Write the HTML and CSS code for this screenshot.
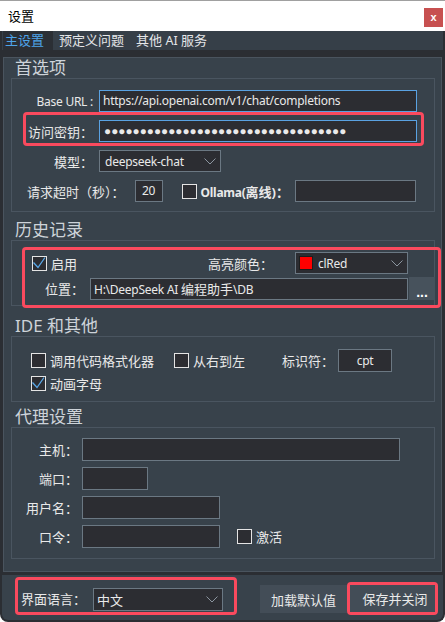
FILE: index.html
```html
<!DOCTYPE html>
<html lang="zh-CN">
<head>
  <meta charset="UTF-8">
  <meta name="viewport" content="width=device-width, initial-scale=1.0">
  <title>设置</title>
  <link rel="stylesheet" href="styles.css">
</head>
<body>
<div class="window">
  <div class="titlebar">
    <span class="caption">设置</span>
    <span class="close">x</span>
  </div>

  <div class="frame">
    <div class="tabs">
      <span class="tab active">主设置</span>
      <span class="tab">预定义问题</span>
      <span class="tab">其他 <span class="en">AI</span> 服务</span>
    </div>

    <div class="page">
      <div class="panel">

        <!-- 首选项 -->
        <div class="group">
          <div class="group-title">首选项</div>
          <div class="box box-main">
            <div class="row row-url">
              <span class="lbl en">Base URL :</span>
              <div class="field focus w-url en">https://api.openai.com/v1/chat/completions</div>
            </div>
            <div class="mark mark-key">
              <div class="row">
                <span class="lbl lbl-key">访问密钥：</span>
                <div class="field focus w-url dots">●●●●●●●●●●●●●●●●●●●●●●●●●●●●●●●●●●</div>
              </div>
            </div>
            <div class="row row-model">
              <span class="lbl">模型：</span>
              <div class="combo w-model">
                <span class="en">deepseek-chat</span>
                <svg width="12" height="7" viewBox="0 0 12 7"><path d="M0.5 0.5 L6 6 L11.5 0.5" fill="none" stroke="#8b959f" stroke-width="1"/></svg>
              </div>
            </div>
            <div class="row row-timeout">
              <span class="lbl-timeout">请求超时（秒）：</span>
              <div class="field w-timeout en">20</div>
              <span class="chk chk-ollama"></span>
              <span class="lbl-ollama"><span class="en">Ollama(</span>离线)：</span>
              <div class="field w-ollama"></div>
            </div>
          </div>
        </div>

        <!-- 历史记录 -->
        <div class="group g-history">
          <div class="group-title">历史记录</div>
          <div class="box">
            <div class="mark mark-history">
              <div class="row row-enable">
                <span class="chk">
                  <svg width="13" height="13" viewBox="0 0 13 13"><path d="M0.5 5.5 L5 10.5 L12 0.5" fill="none" stroke="#5aa8e8" stroke-width="1.3"/></svg>
                </span>
                <span class="chk-text">启用</span>
                <span class="lbl-color">高亮颜色：</span>
                <div class="combo w-color">
                  <span class="color-value"><span class="swatch"></span><span class="en">clRed</span></span>
                  <svg width="12" height="7" viewBox="0 0 12 7"><path d="M0.5 0.5 L6 6 L11.5 0.5" fill="none" stroke="#8b959f" stroke-width="1"/></svg>
                </div>
              </div>
              <div class="row row-path">
                <span class="lbl-path">位置：</span>
                <div class="field w-path"><span class="en">H:\DeepSeek AI </span>编程助手<span class="en">\DB</span></div>
                <span class="btn-browse">...</span>
              </div>
            </div>
          </div>
        </div>

        <!-- IDE 和其他 -->
        <div class="group g-ide">
          <div class="group-title">IDE 和其他</div>
          <div class="box box-ide">
            <div class="row row-ide">
              <span class="opt w-opt1"><span class="chk"></span><span class="chk-text">调用代码格式化器</span></span>
              <span class="opt w-opt2"><span class="chk"></span><span class="chk-text">从右到左</span></span>
              <span class="lbl-ident">标识符：</span>
              <div class="field w-ident en">cpt</div>
            </div>
            <div class="row row-anim">
              <span class="chk">
                <svg width="13" height="13" viewBox="0 0 13 13"><path d="M0.5 5.5 L5 10.5 L12 0.5" fill="none" stroke="#5aa8e8" stroke-width="1.3"/></svg>
              </span>
              <span class="chk-text">动画字母</span>
            </div>
          </div>
        </div>

        <!-- 代理设置 -->
        <div class="group g-proxy">
          <div class="group-title">代理设置</div>
          <div class="box box-proxy">
            <div class="row prow">
              <span class="lbl lbl-proxy">主机：</span>
              <div class="field w-host"></div>
            </div>
            <div class="row prow">
              <span class="lbl lbl-proxy">端口：</span>
              <div class="field w-port"></div>
            </div>
            <div class="row prow">
              <span class="lbl lbl-proxy">用户名：</span>
              <div class="field w-user"></div>
            </div>
            <div class="row prow">
              <span class="lbl lbl-proxy">口令：</span>
              <div class="field w-user"></div>
              <span class="chk chk-active"></span>
              <span class="chk-text">激活</span>
            </div>
          </div>
        </div>

      </div>
    </div>

    <div class="footer">
      <div class="mark mark-lang">
        <span class="lbl-lang">界面语言：</span>
        <div class="combo w-lang">
          <span>中文</span>
          <svg width="12" height="7" viewBox="0 0 12 7"><path d="M0.5 0.5 L6 6 L11.5 0.5" fill="none" stroke="#8b959f" stroke-width="1"/></svg>
        </div>
      </div>
      <span class="btn btn-defaults">加载默认值</span>
      <div class="mark mark-save">
        <span class="btn btn-save">保存并关闭</span>
      </div>
    </div>
  </div>
</div>
</body>
</html>
```

FILE: styles.css
```css
* {
  box-sizing: border-box;
}
body {
  margin: 0;
  background: #fff;
  font-family: "Noto Sans", "Noto Sans CJK SC", sans-serif;
  font-size: 13px;
  color: #e9e9e9;
}
.en {
  font-size: 12px;
  letter-spacing: -0.25px;
}
.window {
  width: 445px;
  height: 622px;
  display: flex;
  flex-direction: column;
}

/* title bar */
.titlebar {
  height: 31px;
  flex: none;
  display: flex;
  align-items: flex-start;
  border-top: 1px solid #a0a0a0;
  color: #000;
}
.caption {
  margin: 6px 0 0 8px;
  line-height: 18px;
}
.close {
  margin: 7px 2px 0 auto;
  width: 19px;
  height: 19px;
  background: #c75050;
  color: #fff;
  font: bold 11px/18px "Liberation Sans", sans-serif;
  text-align: center;
}

/* window body */
.frame {
  flex: 1;
  display: flex;
  flex-direction: column;
  background: #38424b;
  border: 2px solid #2b2e33;
  border-top: 0;
  border-radius: 0 0 8px 8px;
}
.tabs {
  display: flex;
  height: 19px;
  background: #363f48;
}
.tab {
  padding: 0 6px;
  line-height: 19px;
  color: #e4e6e8;
}
.tab .en {
  font-size: 12.5px;
  letter-spacing: 0;
}
.tab.active {
  margin-left: 1px;
  padding: 0 9px 0 2px;
  background: #2b2f35;
  color: #4ea4e9;
}
.page {
  background: #2b2e33;
  padding: 7px 1px 3px;
}
.panel {
  border: 1px solid #4a545e;
  background: #38424b;
  padding: 0 6px 12px 7px;
}

/* group boxes */
.group-title {
  font-size: 17px;
  line-height: 20px;
  padding-left: 4px;
  color: #cdd3d9;
}
.g-history .group-title { padding-top: 8px; }
.g-ide .group-title { padding-top: 10px; }
.g-proxy .group-title { padding-top: 5px; }
.box {
  border: 1px solid #4a5560;
}

/* controls */
.row {
  display: flex;
  align-items: center;
  height: 22px;
}
.lbl {
  flex: none;
  width: 81px;
  margin-right: 6px;
  text-align: right;
  white-space: nowrap;
}
.field {
  flex: none;
  height: 22px;
  border: 1px solid #6b7883;
  background: #2c2d32;
  padding: 0 3px;
  line-height: 20px;
  white-space: nowrap;
  overflow: hidden;
}
.field.focus {
  border-color: #5aa2e2;
}
.combo {
  flex: none;
  display: flex;
  align-items: center;
  justify-content: space-between;
  height: 22px;
  border: 1px solid #6b7883;
  background: #2c2d32;
  padding: 0 4px 0 5px;
}
.combo svg {
  flex: none;
}
.chk {
  flex: none;
  display: flex;
  width: 15px;
  height: 15px;
  border: 1px solid #e4e4e4;
  background: #2c2d32;
}
.chk-text {
  margin-left: 4px;
  white-space: nowrap;
}
.mark {
  border: 3px solid #fa4a5e;
  border-radius: 4px;
}
.btn {
  display: flex;
  align-items: center;
  justify-content: center;
  background: #434d57;
  white-space: nowrap;
}

/* 首选项 */
.box-main { padding-bottom: 9px; }
.row-url { margin-top: 11px; }
.w-url { width: 318px; }
.mark-key {
  margin: 0 10px 0 11px;
  padding: 5px 0 1px;
}
.lbl-key { width: 67px; }
.dots {
  font-family: "Liberation Sans", sans-serif;
  font-size: 11.8px;
  padding-left: 4px;
}
.row-model { margin-top: 4px; }
.w-model { width: 122px; }
.row-timeout {
  margin-top: 8px;
  padding-left: 15px;
}
.lbl-timeout {
  margin-right: 10px;
  white-space: nowrap;
}
.w-timeout {
  width: 28px;
  text-align: center;
}
.chk-ollama { margin-left: 19px; }
.lbl-ollama {
  flex: none;
  width: 98px;
  padding-left: 4px;
  font-weight: bold;
  white-space: nowrap;
}
.w-ollama { width: 121px; }

/* 历史记录 */
.mark-history {
  margin: 6px -7px -3px 10px;
  padding: 2px 0 5px;
}
.row-enable { padding-left: 7px; }
.lbl-color {
  width: 87px;
  margin-left: 131px;
  white-space: nowrap;
}
.w-color { width: 113px; padding-left: 3px; }
.color-value {
  display: flex;
  align-items: center;
}
.swatch {
  width: 14px;
  height: 14px;
  margin-right: 5px;
  background: #f00;
  border: 1px solid #1e1e1e;
}
.row-path {
  margin-top: 3px;
  height: 23px;
  align-items: flex-end;
}
.lbl-path {
  width: 59px;
  margin-right: 6px;
  text-align: right;
  align-self: center;
}
.w-path { width: 318px; }
.btn-browse {
  width: 26px;
  height: 23px;
  margin-left: 1px;
  background: #47525c;
  color: #fff;
  font: bold 14px/1 "Liberation Sans", sans-serif;
  text-align: center;
  padding-top: 8px;
}

/* IDE 和其他 */
.box-ide { padding-bottom: 10px; }
.row-ide {
  margin-top: 12px;
  height: 23px;
  padding-left: 19px;
}
.opt {
  display: flex;
  align-items: center;
}
.w-opt1 { width: 143px; }
.w-opt2 { width: 108px; }
.lbl-ident {
  width: 56px;
  white-space: nowrap;
}
.w-ident {
  width: 54px;
  height: 23px;
  line-height: 21px;
  text-align: center;
}
.row-anim {
  margin-top: 4px;
  height: 15px;
  padding-left: 19px;
}

/* 代理设置 */
.box-proxy { padding-bottom: 10px; }
.prow {
  height: 23px;
  margin-top: 6px;
}
.prow:first-child { margin-top: 10px; }
.lbl-proxy {
  width: 66px;
  margin-right: 4px;
}
.prow .field {
  height: 23px;
}
.w-host { width: 318px; }
.w-port { width: 66px; }
.w-user { width: 138px; }
.chk-active { margin-left: 17px; }

/* bottom bar */
.footer {
  height: 45px;
  display: flex;
  align-items: flex-end;
  padding: 0 0 5px 13px;
}
.mark-lang {
  width: 222px;
  height: 38px;
  display: flex;
  align-items: flex-end;
  padding: 0 0 1px 3px;
}
.lbl-lang {
  width: 72px;
  line-height: 23px;
  white-space: nowrap;
}
.w-lang {
  width: 130px;
  height: 23px;
  padding-left: 3px;
}
.btn-defaults {
  width: 87px;
  height: 28px;
  margin: 0 0 2px 23px;
}
.mark-save {
  width: 91px;
  height: 33px;
  display: flex;
}
.btn-save {
  flex: 1;
  padding-left: 5px;
}
```
